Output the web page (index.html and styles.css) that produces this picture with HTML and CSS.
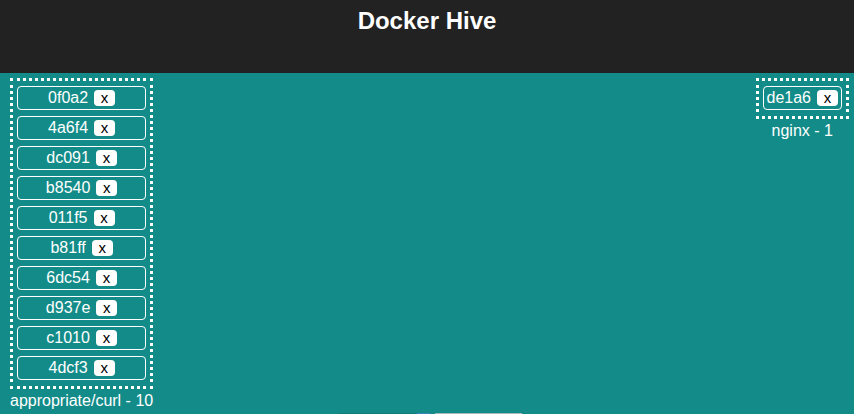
FILE: index.html
```html
<!DOCTYPE html>
<html>
<head>
<meta charset="utf-8">
<title>Docker Hive</title>
<link rel="stylesheet" href="styles.css">
</head>
<body>
<header class="top">
  <h1 class="title">Docker Hive</h1>
</header>
<main class="hive">
  <section class="group">
    <div class="box">
      <div class="item"><span class="id">0f0a2</span><button class="kill">x</button></div>
      <div class="item"><span class="id">4a6f4</span><button class="kill">x</button></div>
      <div class="item"><span class="id">dc091</span><button class="kill">x</button></div>
      <div class="item"><span class="id">b8540</span><button class="kill">x</button></div>
      <div class="item"><span class="id">011f5</span><button class="kill">x</button></div>
      <div class="item"><span class="id">b81ff</span><button class="kill">x</button></div>
      <div class="item"><span class="id">6dc54</span><button class="kill">x</button></div>
      <div class="item"><span class="id">d937e</span><button class="kill">x</button></div>
      <div class="item"><span class="id">c1010</span><button class="kill">x</button></div>
      <div class="item"><span class="id">4dcf3</span><button class="kill">x</button></div>
    </div>
    <div class="label">appropriate/curl - 10</div>
  </section>
  <section class="group">
    <div class="box">
      <div class="item"><span class="id">de1a6</span><button class="kill">x</button></div>
    </div>
    <div class="label">nginx - 1</div>
  </section>
</main>
<form class="launch">
  <input class="image-input" type="text">
  <span class="go"></span>
  <span class="submit"></span>
</form>
</body>
</html>
```
FILE: styles.css
```css
html, body {
  margin: 0;
  padding: 0;
}
body {
  background: #138c89;
  font-family: "Liberation Sans", Arial, sans-serif;
  color: #ffffff;
  overflow: hidden;
  height: 414px;
}
.top {
  background: #222222;
  height: 73px;
  box-sizing: border-box;
  padding-top: 7px;
}
.title {
  margin: 0;
  font-size: 24px;
  font-weight: bold;
  text-align: center;
  line-height: 28px;
}
.hive {
  display: flex;
  justify-content: space-between;
  align-items: flex-start;
  padding: 5px 5px 0 10px;
  height: 340px;
  box-sizing: border-box;
}
.group {
  display: flex;
  flex-direction: column;
}
.box {
  border: 3px dotted #ffffff;
  padding: 5px 4px 6px;
  display: flex;
  flex-direction: column;
  gap: 6px;
}
.item {
  height: 24px;
  box-sizing: border-box;
  border: 1px solid #ffffff;
  border-radius: 4px;
  display: flex;
  justify-content: center;
  align-items: center;
  gap: 6px;
  padding: 0 3px;
  font-size: 16px;
  line-height: 22px;
}
.kill {
  background: #ffffff;
  color: #000000;
  border: none;
  border-radius: 4px;
  font-family: "Liberation Sans", Arial, sans-serif;
  font-size: 15px;
  line-height: 16px;
  height: 16px;
  width: 21px;
  padding: 0;
  margin: 0;
}
.label {
  margin-top: 3px;
  font-size: 16px;
  text-align: center;
  white-space: nowrap;
}
.launch {
  display: flex;
  margin: 0;
  padding-left: 339px;
  height: 20px;
}
.image-input {
  width: 78px;
  height: 20px;
  box-sizing: border-box;
  border: none;
  background: #0f7c79;
  padding: 0;
  margin: 0;
}
.go {
  width: 13px;
  height: 20px;
  background: #3d82b8;
}
.submit {
  width: 87px;
  height: 20px;
  margin-left: 5px;
  background: #a9b9b8;
}
```
